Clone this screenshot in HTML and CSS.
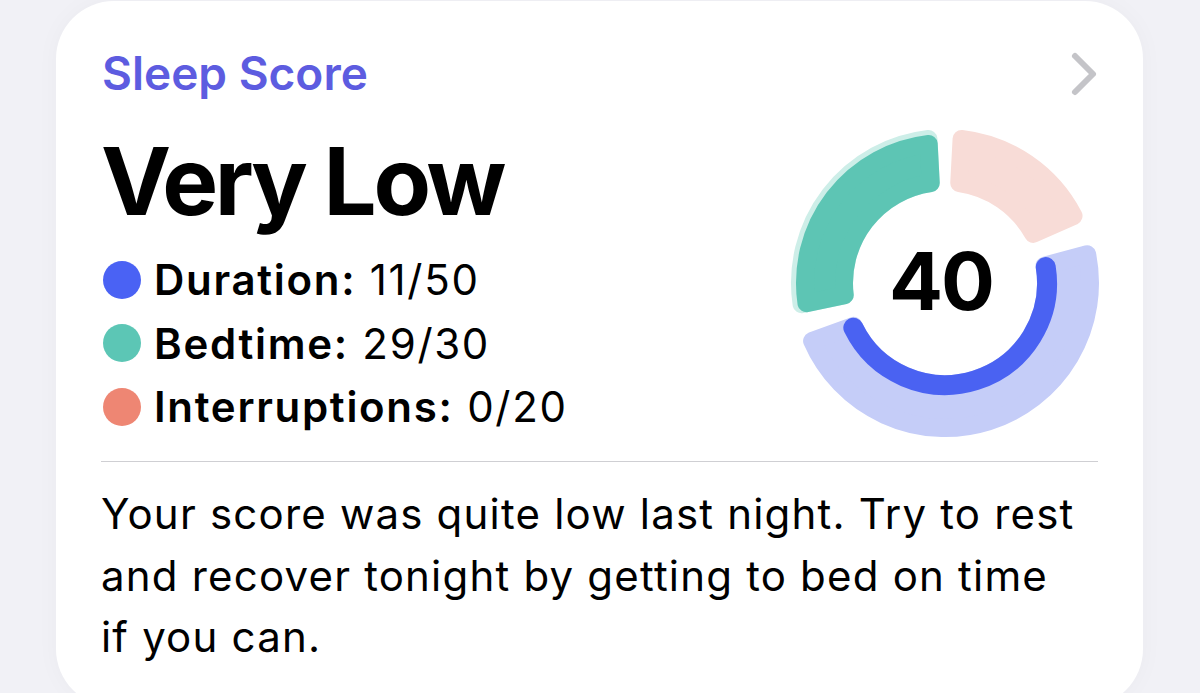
FILE: index.html
```html
<!DOCTYPE html>
<html lang="en">
<head>
<meta charset="utf-8">
<title>Sleep Score</title>
<link rel="stylesheet" href="styles.css">
</head>
<body>
<div class="card">
  <div class="header">
    <span class="title">Sleep Score</span>
    <svg class="chevron" viewBox="0 0 28 46" width="28" height="46" aria-hidden="true">
      <polyline points="5,5 23,23 5,41" fill="none" stroke="#c4c4c8" stroke-width="6" stroke-linecap="round" stroke-linejoin="round"/>
    </svg>
  </div>
  <div class="body">
    <div class="summary">
      <h1 class="heading">Very Low</h1>
      <ul class="legend">
        <li><span class="dot dot-duration"></span><span class="text"><span class="label">Duration:</span> 11/50</span></li>
        <li><span class="dot dot-bedtime"></span><span class="text"><span class="label">Bedtime:</span> 29/30</span></li>
        <li><span class="dot dot-interrupt"></span><span class="text"><span class="label">Interruptions:</span> 0/20</span></li>
      </ul>
    </div>
    <svg class="chart" viewBox="-158 -158 316 316" width="316" height="316">
      <!-- Interruptions track -->
      <path class="seg seg-pink" d="M16.57,-144.05 A145,145 0 0,1 128.54,-67.09 L88.24,-49.14 A101,101 0 0,0 14.25,-99.99 Z"/>
      <!-- Duration track -->
      <path class="seg seg-blue-track" d="M142.12,-28.76 A145,145 0 0,1 -132.92,57.95 L-91.46,42.86 A101,101 0 0,0 99.50,-17.35 Z"/>
      <!-- Duration fill -->
      <path class="blue-fill" d="M100.74,-15.96 A102,102 0 0,1 -91.68,44.71"/>
      <!-- Bedtime track -->
      <path class="seg seg-teal-track" d="M-143.43,21.28 A145,145 0 0,1 -16.56,-144.05 L-14.25,-99.99 A101,101 0 0,0 -100.27,12.12 Z"/>
      <!-- Bedtime fill -->
      <path class="seg seg-teal" d="M-138.53,20.26 A140,140 0 0,1 -16.29,-139.05 L-14.25,-99.99 A101,101 0 0,0 -100.27,12.12 Z"/>
      <text class="score" x="-4" y="27" text-anchor="middle">40</text>
    </svg>
  </div>
  <hr class="divider">
  <p class="note">Your score was quite low last night. Try to rest and recover tonight by getting to bed on time if you can.</p>
</div>
</body>
</html>
```

FILE: styles.css
```css
* {
  box-sizing: border-box;
}

html, body {
  height: 693px;
}

body {
  margin: 0;
  background: #f1f1f6;
  font-family: Inter, "Noto Sans", "Liberation Sans", sans-serif;
  color: #000;
  overflow: hidden;
}

.card {
  margin: 1px 0 0 56px;
  width: 1087px;
  height: 706px;
  background: #fff;
  border-radius: 58px;
  padding: 45px 45px 0;
  box-shadow: 0 0 24px rgba(0, 0, 0, 0.03);
}

.header {
  display: flex;
  justify-content: space-between;
  align-items: center;
  height: 55px;
}

.title {
  font-size: 46px;
  line-height: 55px;
  font-weight: 600;
  color: #5d5ce0;
  padding-left: 1px;
}

.chevron {
  display: block;
  flex: none;
}

.body {
  display: flex;
  justify-content: space-between;
  align-items: flex-start;
}

.summary {
  padding-top: 29px;
}

.heading {
  margin: 0;
  font-size: 94px;
  line-height: 103px;
  font-weight: 700;
  letter-spacing: -3.3px;
}

.legend {
  list-style: none;
  margin: 15px 0 0;
  padding: 0;
}

.legend li {
  display: flex;
  align-items: center;
  gap: 13px;
  font-size: 42px;
  line-height: 63.5px;
  height: 63.5px;
  letter-spacing: 1.7px;
}

.label {
  font-weight: 600;
}

.dot {
  width: 38px;
  height: 38px;
  border-radius: 50%;
  margin-left: 2px;
  flex: none;
}

.dot-duration { background: #4a62f4; }
.dot-bedtime { background: #5cc6b5; }
.dot-interrupt { background: #ee8673; }

.chart {
  display: block;
  flex: none;
  margin-top: 24px;
  margin-right: -5px;
  overflow: visible;
}

.seg {
  stroke-width: 18;
  stroke-linejoin: round;
}

.seg-pink { fill: #f8dcd7; stroke: #f8dcd7; }
.seg-blue-track { fill: #c5cdf8; stroke: #c5cdf8; }
.seg-teal-track { fill: #cdeee8; stroke: #cdeee8; }
.seg-teal { fill: #5dc5b4; stroke: #5dc5b4; }

.blue-fill {
  fill: none;
  stroke: #4a62f2;
  stroke-width: 20;
  stroke-linecap: round;
}

.score {
  font-family: Inter, "Noto Sans", sans-serif;
  font-size: 80px;
  font-weight: 700;
  letter-spacing: -2px;
  fill: #000;
}

.divider {
  border: 0;
  border-top: 1px solid #cfcfd3;
  margin: 20px 0 0;
  height: 0;
}

.note {
  margin: 21px 0 0;
  padding-right: 20px;
  font-size: 42px;
  line-height: 61.5px;
  font-weight: 400;
  letter-spacing: 1.2px;
}
```
